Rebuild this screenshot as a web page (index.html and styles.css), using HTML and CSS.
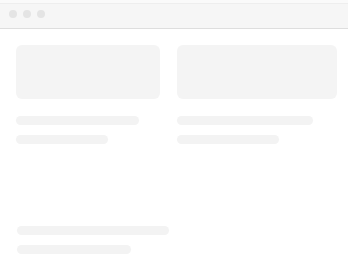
FILE: index.html
```html
<!DOCTYPE html>
<html>
<head>
<meta charset="utf-8">
<link rel="stylesheet" href="styles.css">
</head>
<body>
<div class="window">
  <div class="titlebar">
    <span class="dot"></span><span class="dot"></span><span class="dot"></span>
  </div>
  <div class="content">
    <div class="grid">
      <div class="col">
        <div class="card c1"></div>
        <div class="line l1a"></div>
        <div class="line l1b"></div>
      </div>
      <div class="col">
        <div class="card c2"></div>
        <div class="line l2a"></div>
        <div class="line l2b"></div>
      </div>
    </div>
    <div class="footer">
      <div class="line l3a"></div>
      <div class="line l3b"></div>
    </div>
  </div>
</div>
</body>
</html>
```
FILE: styles.css
```css
html, body {
  margin: 0;
  padding: 0;
  background: #ffffff;
  font-family: "Liberation Sans", Arial, sans-serif;
}
.window {
  width: 348px;
  height: 269px;
  overflow: hidden;
  padding-top: 3px;
  box-sizing: border-box;
  background: linear-gradient(#fafafa 0 3px, #ffffff 3px);
}
.titlebar {
  height: 24px;
  border-top: 1px solid #eeeeee;
  background: #f6f6f6;
  border-bottom: 1px solid #dedede;
  display: flex;
  align-items: center;
  gap: 6px;
  padding-left: 9px;
}
.dot {
  width: 8px;
  height: 8px;
  border-radius: 50%;
  background: #e4e4e4;
  margin-top: -4px;
}
.content {
  padding: 16px 11px 0 16px;
}
.grid {
  display: grid;
  grid-template-columns: 144px 160px;
  column-gap: 17px;
}
.col {
  display: flex;
  flex-direction: column;
}
.card {
  height: 54px;
  border-radius: 6px;
  background: #f4f4f4;
}
.line {
  height: 9px;
  border-radius: 5px;
  background: #f3f3f3;
}
.l1a, .l2a { margin-top: 17px; }
.l1b, .l2b { margin-top: 10px; }
.l1a { width: 123px; }
.l1b { width: 92px; }
.l2a { width: 136px; }
.l2b { width: 102px; }
.footer {
  margin-top: 82px;
  padding-left: 1px;
  display: flex;
  flex-direction: column;
}
.l3a { width: 152px; }
.l3b { width: 114px; margin-top: 10px; }
```
